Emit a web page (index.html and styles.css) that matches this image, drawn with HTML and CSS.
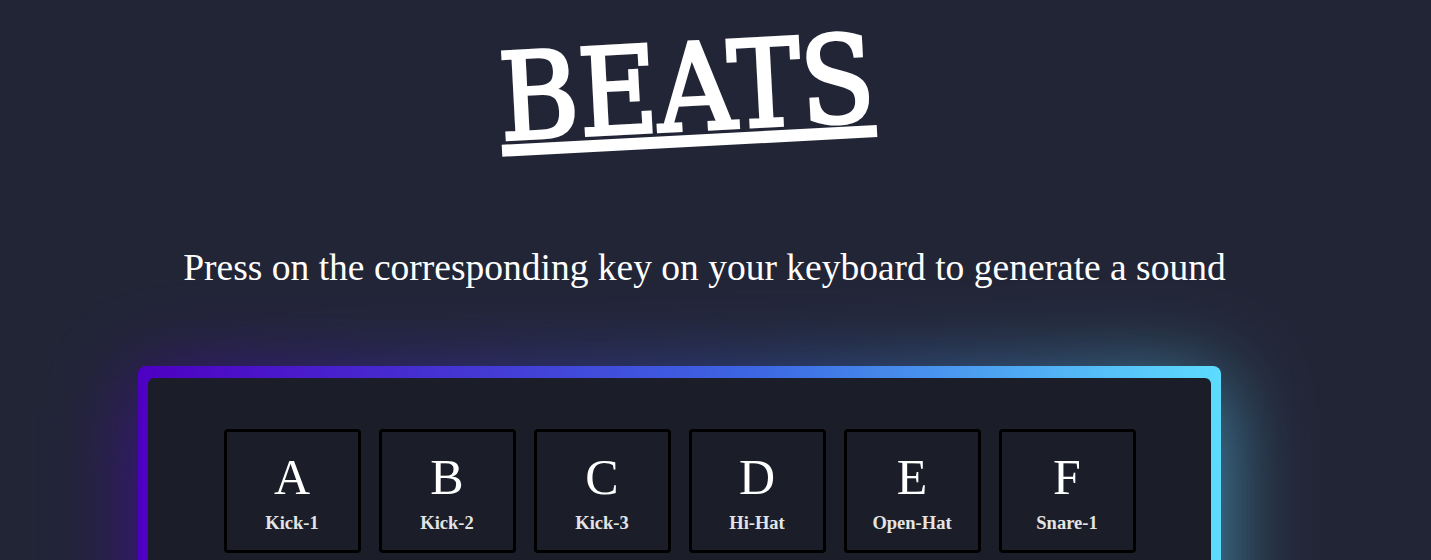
FILE: index.html
```html
<!DOCTYPE html>
<html lang="en">
<head>
<meta charset="utf-8">
<title>Beats</title>
<link rel="stylesheet" href="styles.css">
</head>
<body>
<header class="header">
  <h1 class="title">BEATS</h1>
</header>
<p class="subtitle">Press on the corresponding key on your keyboard to generate a sound</p>
<section class="board">
  <div class="board-inner">
    <div class="keys">
      <div class="key"><span class="key-letter">A</span><span class="key-sound">Kick-1</span></div>
      <div class="key"><span class="key-letter">B</span><span class="key-sound">Kick-2</span></div>
      <div class="key"><span class="key-letter">C</span><span class="key-sound">Kick-3</span></div>
      <div class="key"><span class="key-letter">D</span><span class="key-sound">Hi-Hat</span></div>
      <div class="key"><span class="key-letter">E</span><span class="key-sound">Open-Hat</span></div>
      <div class="key"><span class="key-letter">F</span><span class="key-sound">Snare-1</span></div>
    </div>
  </div>
</section>
</body>
</html>
```

FILE: styles.css
```css
html, body {
  margin: 0;
  padding: 0;
}
body {
  background: #222536;
  color: #ffffff;
  font-family: "Liberation Serif", "Times New Roman", serif;
  overflow: hidden;
  height: 560px;
}
.header {
  display: flex;
  justify-content: center;
  padding-right: 58px;
  padding-top: 28px;
}
.title {
  margin: 0;
  font-family: "DejaVu Serif", serif;
  font-stretch: condensed;
  font-weight: normal;
  font-size: 120px;
  line-height: 121px;
  -webkit-text-stroke: 3.5px #ffffff;
  text-decoration: underline;
  text-decoration-thickness: 12px;
  text-underline-offset: 5px;
  transform: rotate(-3deg);
  color: #ffffff;
}
.subtitle {
  margin: 0;
  margin-top: 98px;
  padding-right: 22px;
  text-align: center;
  font-size: 37.5px;
  line-height: 42px;
}
.board {
  position: relative;
  margin-top: 77px;
  margin-left: 138px;
  width: 1083px;
  height: 400px;
  padding: 12px 10px 10px;
  box-sizing: border-box;
  border-radius: 8px;
  background: linear-gradient(270deg, #5ddcff, #3c67e3 43%, #4e00c2);
}
.board::before {
  content: "";
  position: absolute;
  inset: 15px 0 0 0;
  z-index: -1;
  background: linear-gradient(270deg, #5ddcff, #3c67e3 43%, #4e00c2);
  filter: blur(45px);
  opacity: 0.65;
}
.board-inner {
  height: 100%;
  background: #1b1e29;
  border-radius: 6px;
  padding-top: 51px;
  box-sizing: border-box;
}
.keys {
  display: flex;
  justify-content: center;
  gap: 18px;
}
.key {
  width: 137px;
  box-sizing: border-box;
  border: 3px solid #000;
  border-radius: 4px;
  padding: 20px 0 18px;
  display: flex;
  flex-direction: column;
  align-items: center;
  gap: 13px;
}
.key-letter {
  font-size: 50px;
  line-height: 50px;
  color: #ffffff;
}
.key-sound {
  font-size: 18.5px;
  line-height: 17px;
  font-weight: bold;
  color: #e4e4e4;
}
```
